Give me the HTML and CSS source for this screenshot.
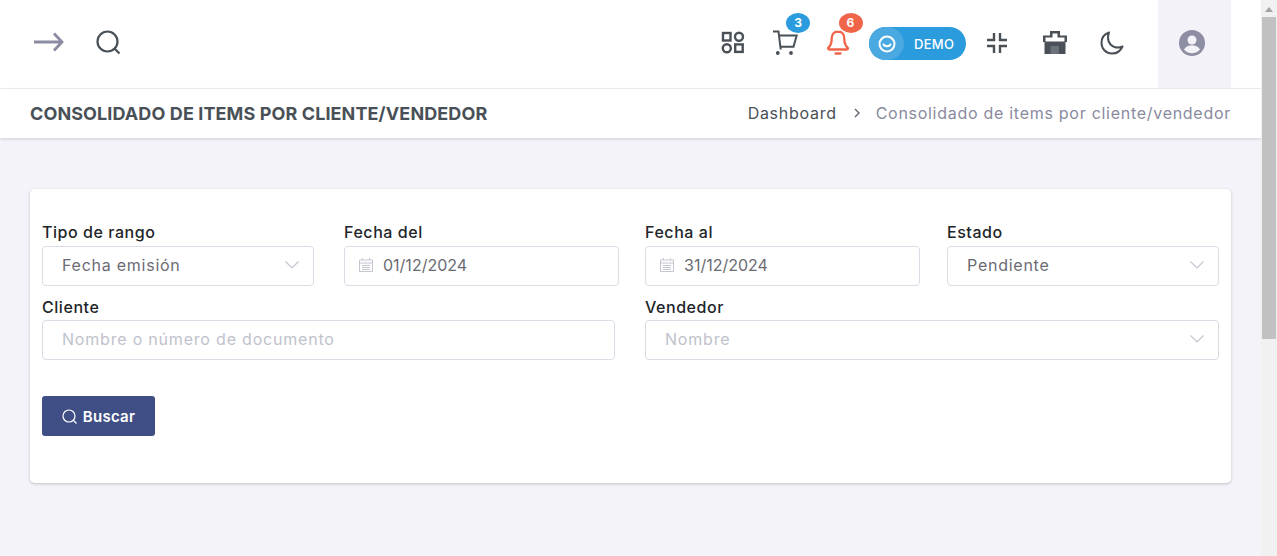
FILE: index.html
```html
<!DOCTYPE html>
<html lang="es">

<head>
    <meta charset="UTF-8">
    <meta name="viewport" content="width=device-width, initial-scale=1.0">
    <title>Consolidado de items por cliente/vendedor</title>
    <link rel="stylesheet" href="styles.css">
</head>

<body>
    <div class="page">
        <header class="topbar">
            <svg class="icon-arrow" width="30" height="20" viewBox="0 0 30 20" fill="none" stroke="currentColor" stroke-width="2.8">
                <path d="M0 10h27M20 1.500l8 8.500-8 8.500" />
            </svg>
            <svg class="icon-search" width="24" height="24" viewBox="0 0 24 24" fill="none" stroke="currentColor" stroke-width="2.2">
                <circle cx="11.500" cy="11.500" r="10" />
                <path d="M18.500 18.500l5 5" />
            </svg>

            <div class="topbar-right">
                <div class="top-item">
                    <svg width="24" height="23" viewBox="0 0 24 23" fill="none" stroke="currentColor" stroke-width="2.4">
                        <rect x="2" y="2" width="7.500" height="7.500" />
                        <circle cx="18" cy="5.800" r="4" />
                        <circle cx="5.800" cy="17.200" r="4" />
                        <rect x="14.200" y="13.400" width="7.500" height="7.500" />
                    </svg>
                </div>
                <div class="top-item">
                    <svg width="26" height="26" viewBox="0 0 26 26" fill="none" stroke="currentColor" stroke-width="2">
                        <path d="M1 1.500h5.500l2.200 18" />
                        <path d="M7.300 5.500h17.400l-3.200 11.200H8" />
                        <circle cx="5.800" cy="23" r="1.900" fill="currentColor" stroke="none" />
                        <circle cx="19" cy="23" r="1.900" fill="currentColor" stroke="none" />
                    </svg>
                    <span class="badge badge-blue">3</span>
                </div>
                <div class="top-item top-item-alert">
                    <svg width="22" height="25" viewBox="0 0 22 25" fill="none" stroke="currentColor" stroke-width="2.300">
                        <path d="M11 1.500c-4 0-6.300 3-6.300 7 0 4.500-.7 7-3.200 9-.8.800-.3 2 .8 2h17.400c1.100 0 1.600-1.200.8-2-2.500-2-3.200-4.500-3.200-9 0-4-2.300-7-6.300-7z" stroke-linejoin="round" />
                        <path d="M8.500 23.500h5" stroke-linecap="round" />
                    </svg>
                    <span class="badge badge-red">6</span>
                </div>
                <div class="demo-pill">
                    <span class="demo-knob">
                        <svg width="18" height="18" viewBox="0 0 18 18" fill="none" stroke="#fff" stroke-width="2">
                            <circle cx="9" cy="9" r="7.500" />
                            <path d="M5.500 9.500c1 2.200 6 2.200 7 0" stroke-linecap="round" />
                        </svg>
                    </span>
                    <span class="demo-text">DEMO</span>
                </div>
                <div class="top-item-wide">
                    <svg width="20" height="20" viewBox="0 0 20 20" fill="none" stroke="currentColor" stroke-width="2.400">
                        <path d="M7 0v7H0M13 0v7h7M7 20v-7H0M13 20v-7h7" />
                    </svg>
                </div>
                <div class="top-item-wide">
                    <svg width="24" height="23" viewBox="0 0 24 23">
                        <path fill="currentColor" fill-rule="evenodd" d="M7 0h10v4.500h7V11h-1.500v12h-21V11H0V4.500h7zM9.500 2.500v4h-7v4h19v-4h-7v-4z" />
                        <path fill="#6b7178" d="M7.500 15h8.500v8H7.500z" />
                    </svg>
                </div>
                <div class="top-item-wide icon-moon">
                    <svg width="24" height="24" viewBox="0 0 24 24" fill="none" stroke="currentColor" stroke-width="2">
                        <path d="M9 1.500C4.500 3 1.500 7 1.500 12c0 6 4.800 10.500 10.500 10.500 4.800 0 8.700-2.800 10.500-7-1.500.8-3 1.100-4.700 1.100C12.200 16.600 8 12.300 8 6.800 8 4.900 8.300 3 9 1.500z" stroke-linejoin="round" />
                    </svg>
                </div>
                <div class="user-box">
                    <svg width="26" height="26" viewBox="0 0 26 26">
                        <circle cx="13" cy="13" r="13" fill="#8d8da3" />
                        <circle cx="13" cy="10" r="4.500" fill="#f3f2f9" />
                        <path d="M5 19.500c1.500-3 5-4.200 8-4.200s6.500 1.200 8 4.200c-1.800 2.300-4.800 3.700-8 3.700s-6.200-1.400-8-3.700z" fill="#f3f2f9" />
                    </svg>
                </div>
            </div>
        </header>

        <div class="titlebar">
            <h1>CONSOLIDADO DE ITEMS POR CLIENTE/VENDEDOR</h1>
            <ul class="crumbs">
                <li class="crumb-link">Dashboard</li>
                <li class="crumb-sep">
                    <svg width="8" height="10" viewBox="0 0 8 10" fill="none" stroke="#5f6670" stroke-width="1.400">
                        <path d="M2 1l4 4-4 4" />
                    </svg>
                </li>
                <li class="crumb-current">Consolidado de items por cliente/vendedor</li>
            </ul>
        </div>

        <main class="content">
            <section class="card">
                <div class="form-row">
                    <div class="field f-tipo">
                        <label>Tipo de rango</label>
                        <div class="input">
                            <span class="value">Fecha emisión</span>
                            <svg class="chevron" width="14" height="8" viewBox="0 0 14 8" fill="none" stroke="#c4c6d0" stroke-width="1.200">
                                <path d="M.5.500L7 7 13.500.500" />
                            </svg>
                        </div>
                    </div>
                    <div class="field f-del">
                        <label>Fecha del</label>
                        <div class="input input-date">
                            <svg width="14" height="14" viewBox="0 0 14 14" fill="none" stroke="#c4c6d0" stroke-width="1">
                                <path d="M.5 2h13v11.500H.5zM.5 5h13M3 7.500h8M3 9.500h8M3 11.500h8M3.500 0v2M10.500 0v2" />
                            </svg>
                            <span class="value-date">01/12/2024</span>
                        </div>
                    </div>
                    <div class="field f-al">
                        <label>Fecha al</label>
                        <div class="input input-date">
                            <svg width="14" height="14" viewBox="0 0 14 14" fill="none" stroke="#c4c6d0" stroke-width="1">
                                <path d="M.5 2h13v11.500H.5zM.5 5h13M3 7.500h8M3 9.500h8M3 11.500h8M3.500 0v2M10.500 0v2" />
                            </svg>
                            <span class="value-date">31/12/2024</span>
                        </div>
                    </div>
                    <div class="field f-estado">
                        <label>Estado</label>
                        <div class="input">
                            <span class="value">Pendiente</span>
                            <svg class="chevron" width="14" height="8" viewBox="0 0 14 8" fill="none" stroke="#c4c6d0" stroke-width="1.200">
                                <path d="M.5.500L7 7 13.500.500" />
                            </svg>
                        </div>
                    </div>
                </div>
                <div class="form-row form-row-second">
                    <div class="field f-cliente">
                        <label>Cliente</label>
                        <div class="input">
                            <span class="placeholder">Nombre o número de documento</span>
                        </div>
                    </div>
                    <div class="field f-vendedor">
                        <label>Vendedor</label>
                        <div class="input">
                            <span class="placeholder">Nombre</span>
                            <svg class="chevron" width="14" height="8" viewBox="0 0 14 8" fill="none" stroke="#c4c6d0" stroke-width="1.200">
                                <path d="M.5.500L7 7 13.500.500" />
                            </svg>
                        </div>
                    </div>
                </div>
                <button class="btn-search" type="button">
                    <svg width="15" height="15" viewBox="0 0 15 15" fill="none" stroke="#fff" stroke-width="1.200">
                        <circle cx="7" cy="7" r="6" />
                        <path d="M11.500 11.500l3 3" />
                    </svg>
                    Buscar
                </button>
            </section>
        </main>

        <div class="scrollbar">
            <span class="scroll-up"></span>
            <span class="scroll-thumb"></span>
        </div>
    </div>
</body>

</html>
```
FILE: styles.css
```css
* {
    box-sizing: border-box;
}

html,
body {
    margin: 0;
    padding: 0;
    height: 100%;
    overflow: hidden;
}

body {
    font-family: Inter, "Noto Sans", sans-serif;
    background-color: #f3f3f9;
    color: #212529;
}

.page {
    position: relative;
    height: 556px;
    padding-right: 15px;
}

/* top bar */
.topbar {
    height: 89px;
    background-color: #fff;
    border-bottom: 1px solid #eeeef3;
    display: flex;
    align-items: center;
    padding: 0 31px 5px 34px;
    color: #495057;
}

.icon-arrow {
    color: #8b8ba3;
}

.icon-search {
    margin-left: 32px;
    flex: none;
}

.topbar-right {
    margin-left: auto;
    display: flex;
    align-items: center;
    height: 88px;
    margin-bottom: -5px;
}

.top-item {
    position: relative;
    width: 52.5px;
    display: flex;
    justify-content: center;
    padding-bottom: 3px;
}

.top-item-alert {
    color: #f0654a;
}

.top-item-wide {
    width: 58px;
    display: flex;
    justify-content: center;
    padding-bottom: 3px;
}

.icon-moon {
    padding-right: 2px;
}

.badge {
    position: absolute;
    top: -17px;
    left: 27px;
    width: 24px;
    height: 20px;
    border-radius: 50%;
    color: #fff;
    font-size: 12px;
    font-weight: 700;
    text-align: center;
    line-height: 19px;
}

.badge-blue {
    background-color: #2a9bdc;
}

.badge-red {
    background-color: #f0654a;
}

.demo-pill {
    margin: 0 2px 1px 5px;
    width: 97px;
    height: 33px;
    border-radius: 17px;
    background-color: #2a9bdc;
    display: flex;
    align-items: center;
    overflow: hidden;
}

.demo-knob {
    width: 35px;
    height: 33px;
    border-radius: 0 17px 17px 0;
    background-color: #4aa9e1;
    display: flex;
    align-items: center;
    justify-content: center;
}

.demo-text {
    margin-left: 10px;
    color: #fff;
    font-size: 13px;
    font-weight: 500;
    letter-spacing: 0.3px;
}

.user-box {
    margin-left: 16px;
    width: 73px;
    height: 88px;
    background-color: #f3f2f9;
    display: flex;
    align-items: center;
    justify-content: center;
    padding: 0 6px 3px 0;
}

/* title and breadcrumb */
.titlebar {
    height: 49px;
    background-color: #fff;
    box-shadow: 0 1px 3px rgba(40, 40, 60, 0.18);
    display: flex;
    align-items: center;
    justify-content: space-between;
    padding: 0 31px 1px 30px;
}

.titlebar h1 {
    margin: 0;
    font-size: 18px;
    font-weight: 700;
    color: #495057;
    letter-spacing: 0.1px;
    white-space: nowrap;
}

.crumbs {
    list-style: none;
    margin: 0;
    padding: 0;
    display: flex;
    align-items: center;
    font-size: 16px;
    letter-spacing: 0.72px;
    white-space: nowrap;
}

.crumb-link {
    color: #495057;
}

.crumb-sep {
    display: flex;
    margin: 0 15px 0 16px;
}

.crumb-current {
    color: #8a8a9e;
}

/* filter card */
.content {
    padding: 51px 31px 0 30px;
}

.card {
    height: 294px;
    background-color: #fff;
    border-radius: 5px;
    box-shadow: 0 1px 3px rgba(40, 40, 60, 0.25);
    padding: 33px 12px 0;
}

.form-row {
    display: flex;
}

.form-row-second {
    margin-top: 11px;
}

.field label {
    display: block;
    height: 21px;
    line-height: 21px;
    margin-bottom: 3px;
    font-size: 16px;
    font-weight: 500;
    letter-spacing: 0.55px;
    color: #212529;
}

.form-row-second .field label {
    margin-bottom: 2px;
}

.f-tipo {
    width: 272px;
}

.f-del {
    width: 275px;
    margin-left: 30px;
}

.f-al {
    width: 275px;
    margin-left: 26px;
}

.f-estado {
    width: 272px;
    margin-left: 27px;
}

.f-cliente {
    width: 573px;
}

.f-vendedor {
    width: 574px;
    margin-left: 30px;
}

.input {
    height: 40px;
    background-color: #fff;
    border: 1px solid #dcdce6;
    border-radius: 4px;
    display: flex;
    align-items: center;
    padding: 0 14px 2px 19px;
    font-size: 16px;
}

.input-date {
    padding-left: 14px;
    gap: 10px;
}

.value {
    color: #6b6b73;
    letter-spacing: 0.75px;
}

.value-date {
    color: #6b6b73;
}

.placeholder {
    color: #bfc2cc;
    letter-spacing: 0.8px;
}

.chevron {
    margin-left: auto;
}

.btn-search {
    margin-top: 36px;
    width: 113px;
    height: 40px;
    border: none;
    border-radius: 3px;
    background-color: #3f4f85;
    color: #fff;
    font-family: inherit;
    font-size: 15px;
    font-weight: 600;
    letter-spacing: 0.3px;
    display: flex;
    align-items: center;
    justify-content: center;
    gap: 6px;
}

/* scrollbar drawn on the right edge */
.scrollbar {
    position: absolute;
    top: 0;
    right: 0;
    width: 16px;
    height: 556px;
    background-color: #f1f1f1;
    padding: 0 1px;
}

.scroll-up {
    display: block;
    width: 0;
    height: 0;
    margin: 7px auto 5px;
    border-left: 4px solid transparent;
    border-right: 4px solid transparent;
    border-bottom: 5px solid #a3a3a3;
}

.scroll-thumb {
    display: block;
    height: 322px;
    background-color: #c1c1c1;
}
```
